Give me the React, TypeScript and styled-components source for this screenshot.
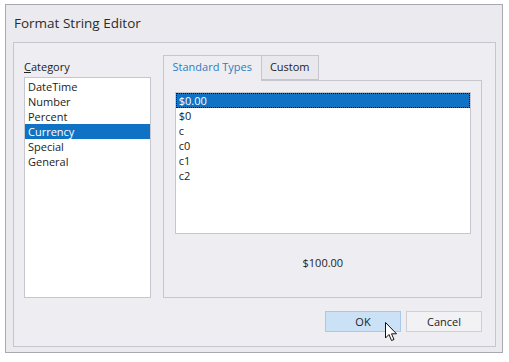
import React from "react";
import styled, { createGlobalStyle } from "styled-components";

const GlobalStyle = createGlobalStyle`
  html, body { margin: 0; padding: 0; background: #ffffff; }
  body { font-family: "Segoe UI", "Open Sans", "Liberation Sans", sans-serif; color: #222; }
  * { box-sizing: border-box; }
`;

const Window = styled.div`
  margin: 4px 0 0 5px;
  width: 498px;
  height: 349px;
  border: 1px solid #a8a8b2;
  background: #ebebef;
  display: flex;
  flex-direction: column;
`;

const TitleBar = styled.div`
  height: 37px;
  padding: 9px 0 0 8px;
  font-size: 13.5px;
  line-height: 19px;
  color: #2b2b2b;
`;

const Panel = styled.div`
  flex: 1;
  margin: 0 6px 5px 7px;
  border: 1px solid #c6c6ce;
  background: #eeeef2;
  display: flex;
  flex-direction: column;
  padding: 12px 13px 13px 10px;
`;

const TopRow = styled.div`
  display: flex;
  gap: 12px;
  height: 243px;
`;

const CategoryColumn = styled.div`
  width: 127px;
  display: flex;
  flex-direction: column;
  padding-top: 4px;
`;

const Label = styled.div`
  font-size: 11px;
  line-height: 15px;
  height: 15px;
  margin-bottom: 3px;
  color: #222;
`;

const ListBox = styled.div`
  flex: 1;
  background: #ffffff;
  border: 1px solid #c6c6ce;
  display: flex;
  flex-direction: column;
  padding-top: 1px;
`;

const Item = styled.div<{ $selected?: boolean; $focus?: boolean; $indent: number }>`
  height: 15px;
  line-height: 15px;
  font-size: 11px;
  padding-left: ${(p) => p.$indent}px;
  white-space: nowrap;
  color: ${(p) => (p.$selected ? "#ffffff" : "#222")};
  background: ${(p) => (p.$selected ? "#0f72c4" : "transparent")};
  outline: ${(p) => (p.$focus ? "1px dotted #111" : "none")};
  outline-offset: -1px;
`;

const TabsColumn = styled.div`
  width: 320px;
  display: flex;
  flex-direction: column;
`;

const TabStrip = styled.div`
  display: flex;
  height: 25px;
  position: relative;
  z-index: 1;
`;

const Tab = styled.div<{ $active?: boolean; $width: number }>`
  width: ${(p) => p.$width}px;
  height: ${(p) => (p.$active ? 26 : 25)}px;
  border: 1px solid #c6c6ce;
  border-bottom: ${(p) => (p.$active ? "none" : "1px solid #c6c6ce")};
  border-left: ${(p) => (p.$active ? "1px solid #c6c6ce" : "none")};
  background: ${(p) => (p.$active ? "#eeeef2" : "#e9e9ed")};
  color: ${(p) => (p.$active ? "#2f7cc3" : "#222")};
  font-size: 11px;
  line-height: 22px;
  text-align: center;
`;

const TabPanel = styled.div`
  flex: 1;
  border: 1px solid #c6c6ce;
  background: #eeeef2;
  display: flex;
  flex-direction: column;
  padding: 11px 10px 0 11px;
`;

const FormatList = styled.div`
  height: 142px;
  background: #ffffff;
  border: 1px solid #c6c6ce;
  display: flex;
  flex-direction: column;
`;

const Preview = styled.div`
  margin-top: 21px;
  font-size: 11px;
  line-height: 15px;
  text-align: center;
  color: #222;
`;

const ButtonRow = styled.div`
  margin-top: 13px;
  display: flex;
  justify-content: flex-end;
  gap: 5px;
  position: relative;
`;

const Button = styled.div<{ $primary?: boolean }>`
  width: 76px;
  height: 21px;
  border: 1px solid ${(p) => (p.$primary ? "#a6c8ea" : "#cfcfd5")};
  background: ${(p) => (p.$primary ? "#cbe1f6" : "#f2f2f4")};
  font-size: 11px;
  line-height: 19px;
  text-align: center;
  color: #222;
  position: relative;
`;

const Cursor = styled.svg`
  position: absolute;
  left: 59px;
  top: 10px;
  width: 13px;
  height: 20px;
`;

const categories = ["DateTime", "Number", "Percent", "Currency", "Special", "General"];
const formats = ["$0.00", "$0", "c", "c0", "c1", "c2"];

export default function App() {
  return (
    <>
      <GlobalStyle />
      <Window>
        <TitleBar>Format String Editor</TitleBar>
        <Panel>
          <TopRow>
            <CategoryColumn>
              <Label>
                <u>C</u>ategory
              </Label>
              <ListBox>
                {categories.map((c) => (
                  <Item key={c} $indent={3} $selected={c === "Currency"}>
                    {c}
                  </Item>
                ))}
              </ListBox>
            </CategoryColumn>
            <TabsColumn>
              <TabStrip>
                <Tab $active $width={99}>Standard Types</Tab>
                <Tab $width={57}>Custom</Tab>
              </TabStrip>
              <TabPanel>
                <FormatList>
                  {formats.map((f, i) => (
                    <Item key={f} $indent={3} $selected={i === 0} $focus={i === 0}>
                      {f}
                    </Item>
                  ))}
                </FormatList>
                <Preview>$100.00</Preview>
              </TabPanel>
            </TabsColumn>
          </TopRow>
          <ButtonRow>
            <Button $primary>
              OK
              <Cursor viewBox="0 0 13 20">
                <path
                  d="M0.5 0.5 L0.5 16 L4 12.5 L6.5 18.5 L9 17.5 L6.5 11.8 L11.5 11.8 Z"
                  fill="#ffffff"
                  stroke="#111111"
                  strokeWidth="1"
                  strokeLinejoin="miter"
                />
              </Cursor>
            </Button>
            <Button>Cancel</Button>
          </ButtonRow>
        </Panel>
      </Window>
    </>
  );
}
